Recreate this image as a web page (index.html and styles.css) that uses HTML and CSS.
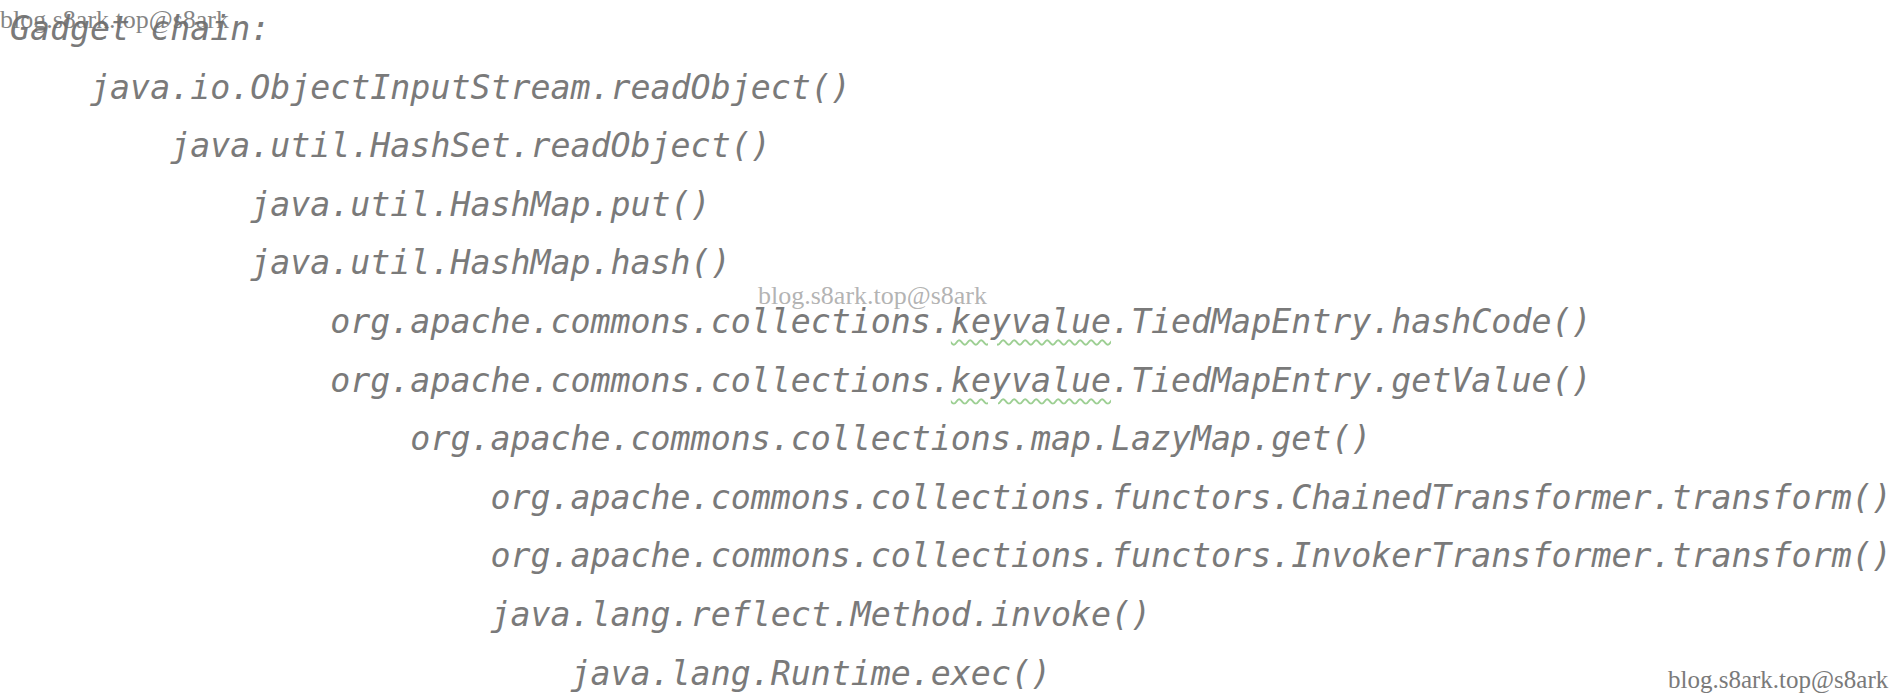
FILE: index.html
```html
<!DOCTYPE html>
<html lang="en">
<head>
<meta charset="utf-8">
<title>Gadget chain</title>
<link rel="stylesheet" href="styles.css">
</head>
<body>
<main class="page">
<pre class="code"><span class="line">Gadget chain:</span>
<span class="line">    java.io.ObjectInputStream.readObject()</span>
<span class="line">        java.util.HashSet.readObject()</span>
<span class="line">            java.util.HashMap.put()</span>
<span class="line">            java.util.HashMap.hash()</span>
<span class="line">                org.apache.commons.collections.<span class="typo">keyvalue</span>.TiedMapEntry.hashCode()</span>
<span class="line">                org.apache.commons.collections.<span class="typo">keyvalue</span>.TiedMapEntry.getValue()</span>
<span class="line">                    org.apache.commons.collections.map.LazyMap.get()</span>
<span class="line">                        org.apache.commons.collections.functors.ChainedTransformer.transform()</span>
<span class="line">                        org.apache.commons.collections.functors.InvokerTransformer.transform()</span>
<span class="line">                        java.lang.reflect.Method.invoke()</span>
<span class="line">                            java.lang.Runtime.exec()</span></pre>
<span class="watermark wm-top">blog.s8ark.top@s8ark</span>
<span class="watermark wm-mid">blog.s8ark.top@s8ark</span>
<span class="watermark wm-bottom">blog.s8ark.top@s8ark</span>
</main>
</body>
</html>
```
FILE: styles.css
```css
html, body {
  margin: 0;
  padding: 0;
  background: #ffffff;
  overflow: hidden;
}

.page {
  position: relative;
  width: 1897px;
  height: 695px;
  overflow: hidden;
}

.code {
  margin: 0;
  padding: 0 0 0 10px;
  font-family: "DejaVu Sans Mono", "Liberation Mono", monospace;
  font-style: italic;
  font-size: 33.25px;
  line-height: 58.6px;
  color: #7a7a7a;
  white-space: pre;
}

.typo {
  text-decoration-line: underline;
  text-decoration-style: wavy;
  text-decoration-color: #9dcf93;
  text-decoration-thickness: 1.5px;
  text-underline-offset: 6px;
}

.watermark {
  position: absolute;
  font-family: "Liberation Serif", "DejaVu Serif", serif;
  line-height: 1;
  white-space: nowrap;
}

.wm-top {
  left: 0;
  top: 7px;
  font-size: 26px;
  color: rgba(110, 110, 110, 0.85);
}

.wm-mid {
  left: 758px;
  top: 283px;
  font-size: 26px;
  color: rgba(160, 160, 160, 0.8);
}

.wm-bottom {
  left: 1668px;
  top: 667px;
  font-size: 25px;
  color: #7a7a7a;
}
```
